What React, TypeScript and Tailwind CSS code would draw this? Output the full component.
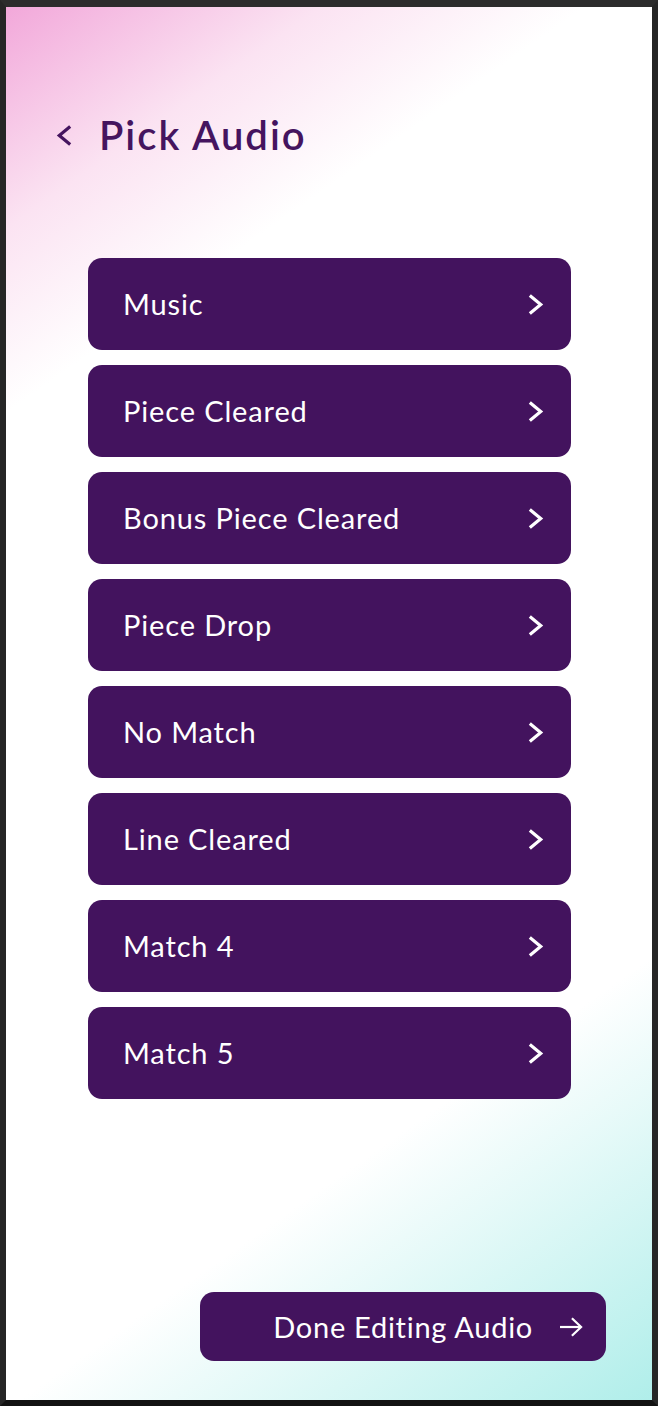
const sounds = [
  "Music",
  "Piece Cleared",
  "Bonus Piece Cleared",
  "Piece Drop",
  "No Match",
  "Line Cleared",
  "Match 4",
  "Match 5",
];

// wide, flat-ended chevron like the mock
const Chevron = ({ flip = false, className = "" }: { flip?: boolean; className?: string }) => (
  <svg viewBox="0 0 18 24" className={className} fill="none" stroke="currentColor" strokeWidth={3.4}>
    <polyline points={flip ? "15,2.5 3.5,12 15,21.5" : "3,2.5 14.5,12 3,21.5"} />
  </svg>
);

const AudioRow = ({ label }: { label: string }) => (
  <button
    type="button"
    className="flex h-[92px] w-full items-center justify-between rounded-[14px] bg-[#43135e] pl-[35px] pr-[27px] text-left text-[29px] tracking-[0.03em] text-white"
  >
    <span>{label}</span>
    <Chevron className="h-[23px] w-[17px]" />
  </button>
);

export default function App() {
  return (
    <div className="h-[1406px] w-[658px] border-t-[7px] border-r-[6px] border-b-[6px] border-l-[6px] border-t-[#2c2c2c] border-r-[#262626] border-b-[#121212] border-l-[#262626] font-['Lato',sans-serif]">
      <div className="flex h-full flex-col bg-[linear-gradient(145deg,#f2a8da_0%,#fbe3f2_12%,#ffffff_22%,#ffffff_76%,#b0eeea_100%)]">
        <div className="flex items-center pl-[50px] pt-[108px]">
          <Chevron flip className="h-[23px] w-[17px] text-[#45145f]" />
          <h1 className="ml-[26px] text-[40px] font-semibold leading-none tracking-[0.05em] text-[#45145f]">Pick Audio</h1>
        </div>

        <div className="ml-[82px] mt-[103px] flex w-[483px] flex-col gap-[15px]">
          {sounds.map((s) => (
            <AudioRow key={s} label={s} />
          ))}
        </div>

        <div className="mt-auto flex justify-end pb-[39px] pr-[46px]">
          <button
            type="button"
            className="flex h-[69px] w-[406px] items-center justify-end gap-[26px] rounded-[14px] bg-[#43135e] pr-[23px] text-[29px] tracking-[0.025em] text-white"
          >
            <span>Done Editing Audio</span>
            <svg viewBox="0 0 26 24" className="h-[22px] w-[24px]" fill="none" stroke="currentColor" strokeWidth={2.4}>
              <line x1="1" y1="12" x2="24" y2="12" />
              <polyline points="14,2.5 24,12 14,21.5" />
            </svg>
          </button>
        </div>
      </div>
    </div>
  );
}
